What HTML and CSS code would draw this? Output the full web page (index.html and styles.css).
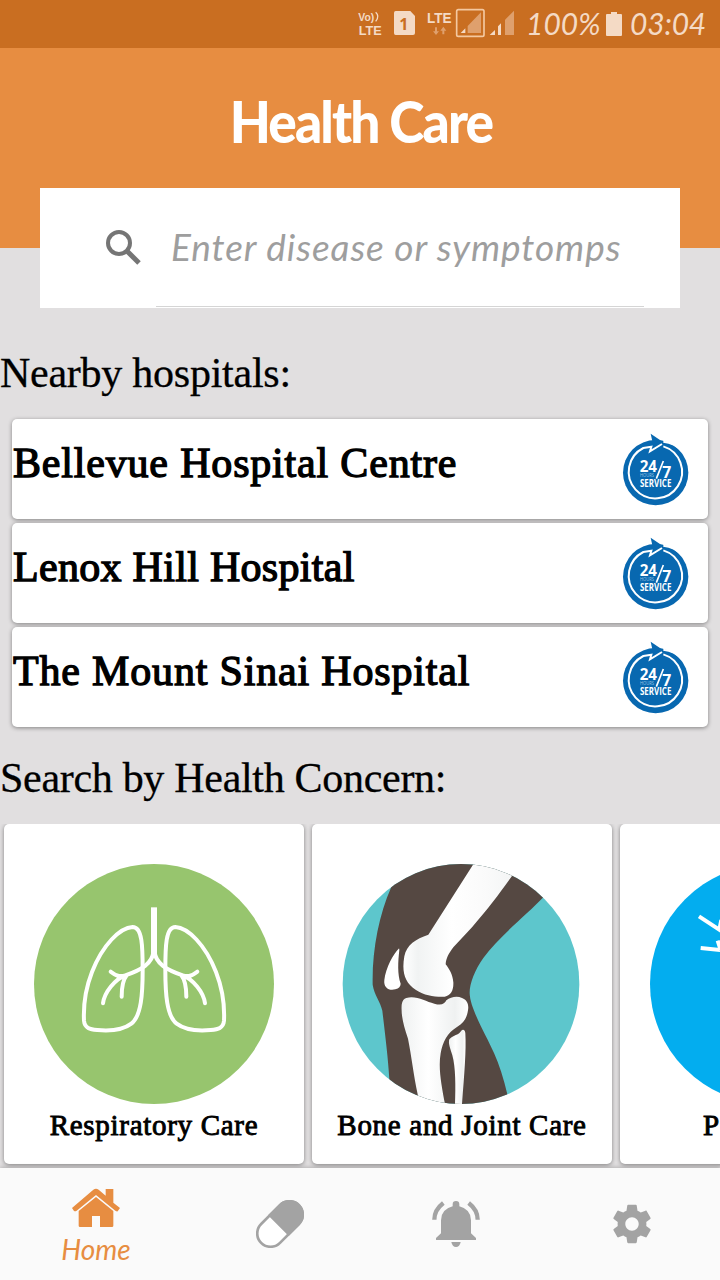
FILE: index.html
```html
<!DOCTYPE html>
<html lang="en">
<head>
<meta charset="utf-8">
<title>Health Care</title>
<link rel="stylesheet" href="styles.css">
</head>
<body>
<svg class="defs" width="0" height="0">
  <symbol id="service" viewBox="66 66 204 228">
    <circle cx="167" cy="188" r="98" fill="#0868b0"/>
    <path d="M152 71L190 97L148 127L152 112L130 112L158 98Z" fill="#0868b0"/>
    <path d="M190 95Q224 98 246 124" fill="none" stroke="#fff" stroke-width="6"/>
    <path d="M190 109A80 80 0 1 1 130 114L154 110L150 124L186 102" fill="none" stroke="#fff" stroke-width="6"/>
    <text x="119" y="185" class="badge-big" textLength="52" lengthAdjust="spacingAndGlyphs">24</text>
    <path d="M190 153L169 206" stroke="#fff" stroke-width="5"/>
    <text x="187" y="205" class="badge-big" textLength="27" lengthAdjust="spacingAndGlyphs">7</text>
    <text x="120" y="202" class="badge-hours" textLength="42" lengthAdjust="spacingAndGlyphs">HOURS</text>
    <text x="120" y="231" class="badge-service" textLength="94" lengthAdjust="spacingAndGlyphs">SERVICE</text>
  </symbol>
</svg>
<div class="app">
  <div class="status">
    <svg width="176" height="48" viewBox="0 0 528 144" fill="#f4dac5">
      <text x="13" y="62" class="lte" textLength="48" lengthAdjust="spacingAndGlyphs">Vo)</text>
      <path d="M65 37Q78 49 65 64" fill="none" stroke="#f4dac5" stroke-width="4"/>
      <text x="14" y="105" class="lte big" textLength="69" lengthAdjust="spacingAndGlyphs">LTE</text>
      <path d="M125 33H169L183 48V99Q183 105 177 105H125Q120 105 120 99V39Q120 33 125 33Z"/>
      <text x="136" y="89" class="sim">1</text>
      <text x="219" y="69" class="lte top" textLength="74" lengthAdjust="spacingAndGlyphs">LTE</text>
      <path d="M243 82H249V94H255L246 105L237 94H243ZM265 103H271V92H277L268 80L259 92H265Z" fill="#dfa06d"/>
      <rect x="308" y="29" width="82" height="80" rx="5" fill="none" stroke="#f4c8a0" stroke-width="5"/>
      <path d="M341 99V78L381 37V99Z" fill="#dfa06d"/>
      <path d="M320 99H334V85ZM407 105H423V90ZM432 105V79L441 70V105Z"/>
      <path d="M453 105V59L480 32V105Z" fill="#dfa06d"/>
    </svg>
    <span class="hand percent">100%</span>
    <svg class="battery" width="16" height="24" viewBox="0 0 16 24"><path d="M5 0H11V2H15Q16 2 16 3V23Q16 24 15 24H1Q0 24 0 23V3Q0 2 1 2H5Z" fill="#f4dac5"/></svg>
    <span class="hand time">03:04</span>
  </div>
  <header class="header"><h1>Health Care</h1></header>
  <div class="search">
    <svg width="36" height="36" viewBox="0 0 36 36" fill="none" stroke="#757575"><circle cx="13" cy="13" r="11" stroke-width="4"/><path d="M21 21L33 33" stroke-width="5"/></svg>
    <div class="field"><span class="hand placeholder">Enter disease or symptomps</span></div>
  </div>
  <h2 class="nearby"><span>Nearby hospitals:</span></h2>
  <div class="hospitals">
    <div class="hospital"><span class="n1">Bellevue Hospital Centre</span><svg width="68" height="76"><use href="#service"/></svg></div>
    <div class="hospital"><span class="n2">Lenox Hill Hospital</span><svg width="68" height="76"><use href="#service"/></svg></div>
    <div class="hospital"><span class="n3">The Mount Sinai Hospital</span><svg width="68" height="76"><use href="#service"/></svg></div>
  </div>
  <h2 class="concern"><span>Search by Health Concern:</span></h2>
  <div class="cards">
    <div class="card">
      <svg width="240" height="240" viewBox="102 132 720 720">
        <circle cx="462" cy="492" r="360" fill="#97c56e"/>
        <g fill="none" stroke="#fff" stroke-width="12" stroke-linecap="round" stroke-linejoin="round">
          <path d="M462 262V400" stroke-width="18" stroke-linecap="butt"/>
          <g id="lung">
            <path d="M398 321C360 323 308 374 276 456C255 510 250 560 252 602C254 625 270 628 292 630C326 633 368 631 394 611C424 588 428 520 428 450C428 380 427 321 398 321Z"/>
            <path d="M460 396C457 430 425 449 376 466C355 473 343 463 332 455M376 466C346 477 313 516 309 550M380 466C367 482 365 505 365 530"/>
          </g>
          <use href="#lung" transform="translate(924 0) scale(-1 1)"/>
        </g>
      </svg>
      <span class="c1">Respiratory Care</span>
    </div>
    <div class="card">
      <svg width="240" height="240" viewBox="96 132 720 720">
        <defs>
          <clipPath id="round"><ellipse cx="453" cy="492" rx="355" ry="360"/></clipPath>
          <linearGradient id="femur"><stop offset="0" stop-color="#fff"/><stop offset=".12" stop-color="#f1f3f3"/><stop offset=".4" stop-color="#fff"/><stop offset=".7" stop-color="#fafafa"/><stop offset="1" stop-color="#f1f3f3"/></linearGradient>
          <linearGradient id="tibia"><stop offset="0" stop-color="#eff1f1"/><stop offset=".4" stop-color="#fff"/><stop offset=".8" stop-color="#eff1f1"/><stop offset="1" stop-color="#fff"/></linearGradient>
        </defs>
        <g clip-path="url(#round)">
          <rect x="96" y="132" width="720" height="720" fill="#5dc6cc"/>
          <path d="M243 203L270 120H700V232C650 285 566 350 520 414C494 450 478 493 479 520C480 566 527 642 552 699Q575 750 592 823L590 860H240L238 777C234 710 226 650 217 572C211 544 193 526 188 494C186 390 207 285 243 203Z" fill="#554842"/>
          <path d="M493 128L355 344C317 357 290 374 283 409C275 455 283 488 318 510C344 527 374 531 404 530C424 525 431 509 430 487C428 462 418 448 407 433C408 415 416 401 430 382L486 322C536 264 569 220 606 168L640 110Z" fill="url(#femur)"/>
          <path d="M266 386C251 400 227 443 223 480C220 504 238 513 256 508C267 505 272 499 272 491C262 463 264 425 268 390Q268 385 266 386Z" fill="#fff"/>
          <path d="M289 534C320 526 346 545 373 551C394 557 404 552 409 541C422 531 441 527 456 534C472 540 477 554 474 571C470 596 461 609 442 620C412 638 398 665 392 700C384 744 395 799 405 852H327L323 823C311 767 304 706 294 656C280 614 273 588 275 554Q278 536 289 534Z" fill="url(#tibia)"/>
          <path d="M418 658C426 647 440 646 449 638L456 630Q465 627 466 640C469 693 463 760 456 852H435C437 800 437 742 427 706C421 686 414 670 418 658Z" fill="url(#tibia)"/>
        </g>
      </svg>
      <span class="c2">Bone and Joint Care</span>
    </div>
    <div class="card">
      <svg width="240" height="240" viewBox="150 132 720 720"><circle cx="510" cy="492" r="360" fill="#03adef"/><path d="M297 289L358 329L364 300M302 384L362 390L353 362" fill="none" stroke="#fff" stroke-width="12"/></svg>
      <span class="c3">P</span>
    </div>
  </div>
  <nav class="nav">
    <div class="tab active">
      <svg width="48" height="40" viewBox="216 85 144 118"><path d="M317 110V87H340V128L360 144L353 154Q350 155 346 152L288 105L230 152Q226 155 222 153L216 144L280 89Q288 83 296 89L317 107Z"/><path d="M288 111L340 153V197Q340 201 336 201H300V168H276V201H240Q236 201 236 197V153Z"/></svg>
      <span class="hand">Home</span>
    </div>
    <div class="tab"><svg width="48" height="48" viewBox="768 120 144 144"><g transform="rotate(-45 840 192)"><rect x="760" y="152" width="160" height="80" rx="40" fill="#fff" stroke="#a3a3a3" stroke-width="8"/><path d="M833 148H880A44 44 0 0 1 880 236H833Z"/></g></svg></div>
    <div class="tab"><svg width="48" height="46" viewBox="216 123 144 138"><path d="M278 139V133A10 10 0 0 1 298 133V139Q333 148 333 181V220L348 234V240H228V234L243 220V181Q243 148 278 139Z"/><path d="M274 246H302Q299 261 288 261T274 246Z"/><path d="M250 129Q223 150 223 179M326 129Q353 150 353 179" fill="none" stroke="#a3a3a3" stroke-width="13"/></svg></div>
    <div class="tab"><svg width="46" height="46" viewBox="0 0 24 24"><path d="M19.43 12.98c.04-.32.07-.64.07-.98s-.03-.66-.07-.98l2.11-1.65c.19-.15.24-.42.12-.64l-2-3.46c-.12-.22-.39-.3-.61-.22l-2.49 1c-.52-.4-1.08-.73-1.69-.98l-.38-2.65C14.46 2.18 14.25 2 14 2h-4c-.25 0-.46.18-.49.42l-.38 2.65c-.61.25-1.17.59-1.69.98l-2.49-1c-.23-.09-.49 0-.61.22l-2 3.46c-.13.22-.07.49.12.64l2.11 1.65c-.04.32-.07.65-.07.98s.03.66.07.98l-2.11 1.65c-.19.15-.24.42-.12.64l2 3.46c.12.22.39.3.61.22l2.49-1c.52.4 1.08.73 1.69.98l.38 2.65c.03.24.24.42.49.42h4c.25 0 .46-.18.49-.42l.38-2.65c.61-.25 1.17-.59 1.69-.98l2.49 1c.23.09.49 0 .61-.22l2-3.46c.12-.22.07-.49-.12-.64l-2.11-1.65zM12 15.5c-1.93 0-3.5-1.57-3.5-3.5s1.57-3.5 3.5-3.5 3.5 1.57 3.5 3.5-1.57 3.5-3.5 3.5z"/></svg></div>
  </nav>
</div>
</body>
</html>
```
FILE: styles.css
```css
* { box-sizing: border-box; }
body { margin: 0; }
h1, h2 { margin: 0; }
svg { flex: none; display: block; }
.defs { display: none; }
.app {
  width: 720px;
  height: 1280px;
  overflow: hidden;
  display: flex;
  flex-direction: column;
  background: #e1dfe0;
  color: #000;
  font-family: "Liberation Serif", serif;
  white-space: nowrap;
}
.hand { font-family: Lato, sans-serif; font-style: italic; }
.status {
  height: 48px;
  flex: none;
  display: flex;
  align-items: center;
  padding-left: 354px;
  background: #c96e21;
  color: #f4dac5;
  font-size: 30px;
}
.percent { width: 80px; margin-left: -4px; line-height: 44px; margin-top: -3px; }
.battery { margin: 0 8px 0 0; }
.time { letter-spacing: -0.2px; margin-top: -3px; }
.lte { font: bold 31px "Liberation Sans", sans-serif; }
.lte.big { font-size: 38px; }
.lte.top { font-size: 42px; }
.sim { font: bold 48px "Open Sans", sans-serif; fill: #c96e21; }
.header {
  height: 200px;
  flex: none;
  background: #e78d41;
  color: #fff;
  text-align: center;
}
.header h1 { font: 900 57px/146px Lato, sans-serif; letter-spacing: -2px; transform: translateX(1px) scaleX(.935); }
.search {
  width: 640px;
  height: 120px;
  flex: none;
  margin: -60px 40px 0;
  padding: 0 36px 0 66px;
  display: flex;
  align-items: center;
  gap: 14px;
  background: #fff;
  color: #9e9e9e;
}
.field {
  flex: 1;
  height: 119px;
  margin-bottom: 1px;
  padding-left: 15px;
  border-bottom: 1px solid #d5d5d5;
  line-height: 118px;
}
.placeholder { font-size: 37px; letter-spacing: .92px; }
h2 { font-weight: 400; font-size: 42px; flex: none; }
.nearby { height: 111px; padding-top: 42px; line-height: 46px; letter-spacing: -.25px; -webkit-text-stroke: .3px #000; }
.concern { height: 97px; padding-top: 28px; line-height: 46px; letter-spacing: -.3px; -webkit-text-stroke: .3px #000; }
.hospitals { display: flex; flex-direction: column; gap: 4px; padding: 0 12px; }
.hospital {
  height: 100px;
  border-radius: 5px;
  display: flex;
  justify-content: space-between;
  padding: 0 18px 0 1px;
  background: #fff;
  box-shadow: 0 1px 4px rgba(0, 0, 0, .42);
  font-size: 42px;
  line-height: 88px;
  letter-spacing: .82px;
  -webkit-text-stroke: 1.3px #000;
}
.n2 { letter-spacing: .3px; }
.hospital svg { margin-top: 13px; letter-spacing: 0; -webkit-text-stroke: 0; }
.cards { display: flex; gap: 8px; padding: 0 4px; height: 344px; flex: none; overflow: hidden; }
.card {
  width: 300px;
  height: 340px;
  flex: none;
  padding-top: 40px;
  display: flex;
  flex-direction: column;
  align-items: center;
  background: #fff;
  border-radius: 5px;
  box-shadow: 0 1px 4px rgba(0, 0, 0, .42);
  font-size: 29px;
  line-height: 42px;
  letter-spacing: .7px;
  -webkit-text-stroke: .9px #000;
}
.card svg { -webkit-text-stroke: 0; }
.c3 { align-self: flex-start; margin-left: 83px; }
.badge-big { font: bold 46px "Open Sans", sans-serif; fill: #fff; }
.badge-hours { font: 18px "Open Sans", sans-serif; fill: #9bc4e3; }
.badge-service { font: bold 29px "Open Sans", sans-serif; fill: #fff; }
.nav {
  height: 112px;
  flex: none;
  display: grid;
  grid-template-columns: 192px 176px 176px 176px;
  background: #fafafa;
  box-shadow: 0 -1px 4px rgba(0, 0, 0, .2);
}
.tab { display: flex; flex-direction: column; align-items: center; justify-content: center; fill: #a3a3a3; }
.tab.active { justify-content: flex-start; padding-top: 20px; fill: #e78d41; color: #e78d41; font-size: 28px; line-height: 42px; }
```
